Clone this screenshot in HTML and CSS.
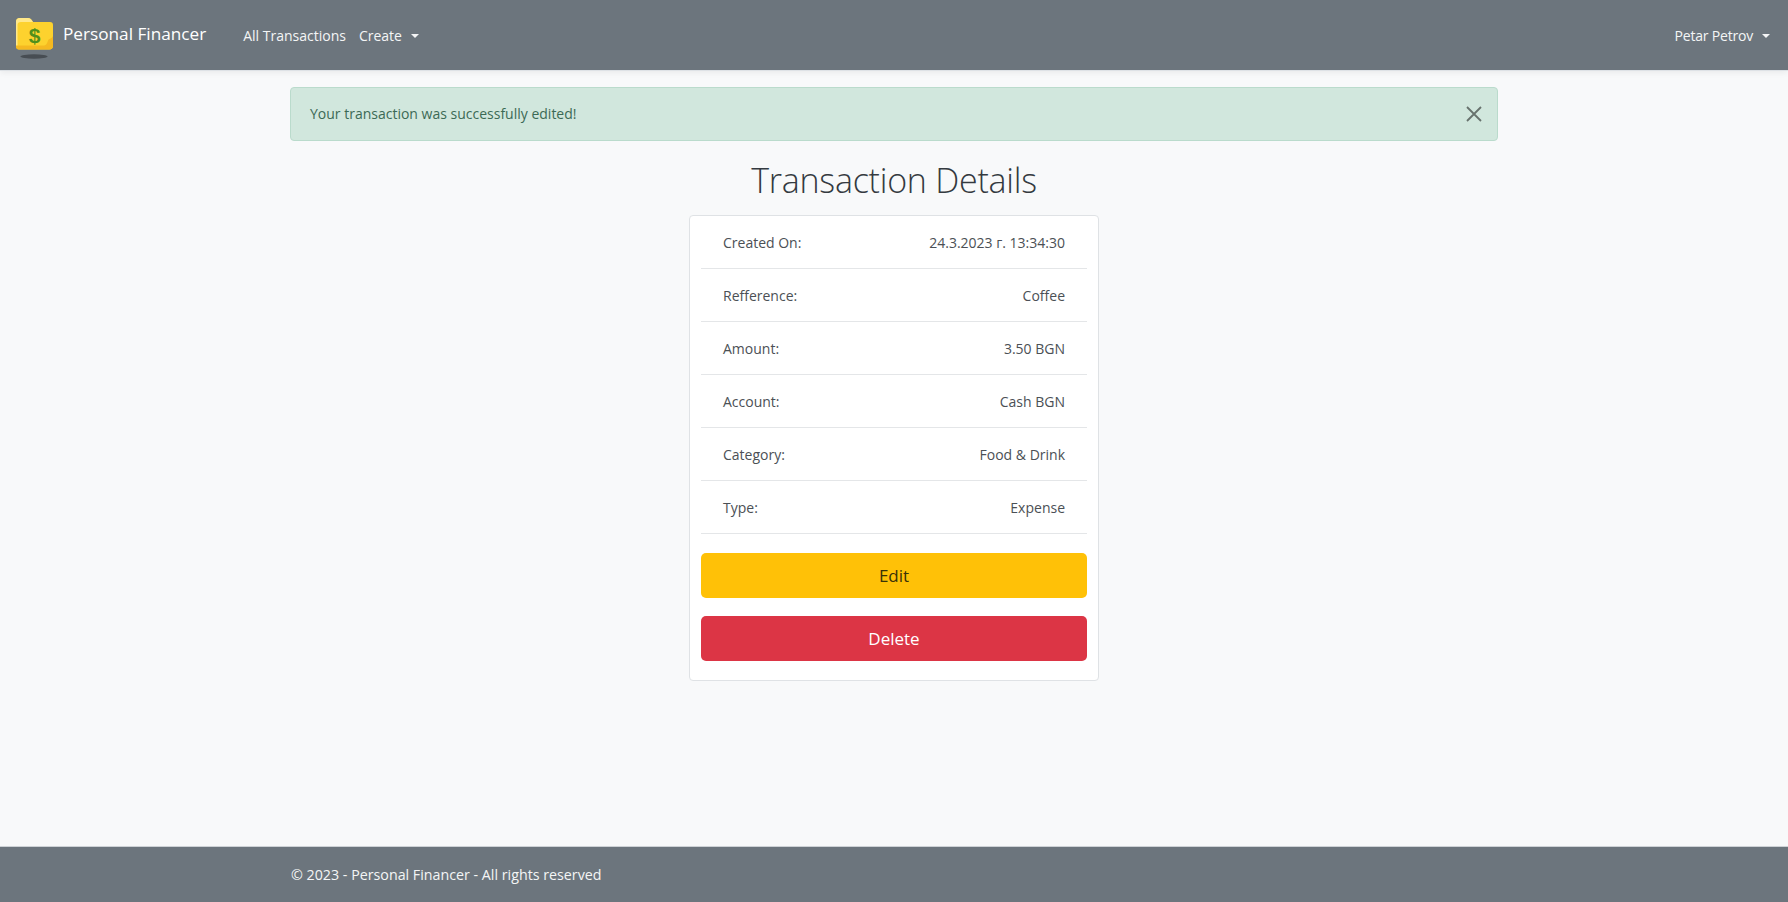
FILE: index.html
```html
<!DOCTYPE html>
<html lang="en">
<head>
<meta charset="utf-8">
<title>Transaction Details - Personal Financer</title>
<link rel="stylesheet" href="styles.css">
</head>
<body>
<header class="navbar">
  <a class="brand" href="#">
    <svg class="logo" width="40" height="44" viewBox="0 0 40 44" aria-hidden="true">
      <ellipse cx="20" cy="39.500" rx="13.500" ry="2.200" fill="#474d53"/>
      <path d="M2 4.500C2 2.500 3.500 1 5.500 1H14c2 0 3 1 4 2.500L19 5h17c2 0 3 1.200 3 3v21c0 2.200-1.500 3.500-3.500 3.500H5c-2 0-3-1.300-3-3.500z" fill="#fdd22e"/>
      <path d="M2 4.500C2 2.500 3.500 1 5.500 1H14c2 0 3 1 4 2.500L19 5H7C4.500 5 3.500 6 3.500 8v21H2z" fill="#ffe88a"/>
      <path d="M2 28.500v1C2 31.300 3.200 32.500 5 32.500h30.500c2 0 3.500-1.300 3.500-3.500V19c-1 2-2 2.500-3.500 3-1.500.6-1.500 2-2 3-.5 1.800-2 3.500-3.500 3.500z" fill="#f5b921"/>
      <text class="logo-dollar" x="20.500" y="25.500" text-anchor="middle">$</text>
    </svg>
    <span>Personal Financer</span>
  </a>
  <nav class="nav-main">
    <a href="#">All Transactions</a>
    <a href="#" class="caret">Create</a>
  </nav>
  <nav class="nav-user">
    <a href="#" class="caret">Petar Petrov</a>
  </nav>
</header>
<main class="container">
  <div class="alert">
    <span>Your transaction was successfully edited!</span>
    <svg class="close" width="16" height="16" viewBox="0 0 16 16" aria-label="Close">
      <path d="M1 1l14 14M15 1L1 15" stroke="#000" stroke-width="1.800" fill="none"/>
    </svg>
  </div>
  <h1 class="title">Transaction Details</h1>
  <section class="card">
    <ul class="rows">
      <li class="row"><span>Created On:</span><span>24.3.2023 г. 13:34:30</span></li>
      <li class="row"><span>Refference:</span><span>Coffee</span></li>
      <li class="row"><span>Amount:</span><span>3.50 BGN</span></li>
      <li class="row"><span>Account:</span><span>Cash BGN</span></li>
      <li class="row"><span>Category:</span><span>Food &amp; Drink</span></li>
      <li class="row"><span>Type:</span><span>Expense</span></li>
    </ul>
    <a href="#" class="btn btn-edit">Edit</a>
    <a href="#" class="btn btn-delete">Delete</a>
  </section>
</main>
<footer class="footer">
  <div class="footer-inner">© 2023 - Personal Financer - All rights reserved</div>
</footer>
</body>
</html>
```
FILE: styles.css
```css
* { box-sizing: border-box; }
html, body { height: 100%; }
body {
  margin: 0;
  min-height: 902px;
  display: flex;
  flex-direction: column;
  background: #f8f9fa;
  color: #4b5055;
  font-family: "Open Sans", "Noto Sans", "Liberation Sans", sans-serif;
  font-size: 14px;
  line-height: 22px;
}
a { text-decoration: none; color: inherit; }

.navbar {
  height: 71px;
  flex: none;
  display: flex;
  align-items: center;
  background: #6c757d;
  border-bottom: 1px solid #dee2e6;
  box-shadow: 0 2px 6px rgba(0, 0, 0, .06);
  color: #f4f5f6;
  padding: 2px 18px 0 14px;
}
.brand {
  display: flex;
  align-items: center;
  gap: 9px;
  font-size: 17.200px;
  margin-right: 37px;
  color: #fff;
}
.brand span { margin-top: -4px; }
.logo { flex: none; margin-top: 6px; }
.logo-dollar {
  font-family: "Liberation Sans", sans-serif;
  font-weight: 700;
  font-size: 21px;
  fill: #4f8f1c;
}
.nav-main { display: flex; gap: 13px; }
.nav-user { margin-left: auto; letter-spacing: -.2px; }
.caret { display: inline-flex; align-items: center; }
.caret::after {
  content: "";
  margin-left: 9px;
  border-top: 4.500px solid currentColor;
  border-left: 4px solid transparent;
  border-right: 4px solid transparent;
}

.container {
  flex: 1;
  width: 1208px;
  margin: 0 auto;
  padding-top: 16px;
}
.alert {
  height: 54px;
  display: flex;
  align-items: center;
  justify-content: space-between;
  padding: 0 15px 0 19px;
  background: #d1e7dd;
  border: 1px solid #badbcc;
  border-radius: 4px;
  color: #3c6a55;
}
.close { opacity: .5; }
.title {
  margin: 15px 0 11px;
  text-align: center;
  font-size: 34px;
  letter-spacing: -.25px;
  line-height: 48px;
  font-weight: 300;
  color: #343a40;
}
.card {
  width: 410px;
  height: 466px;
  margin: 0 auto;
  padding: 0 11px;
  background: #fff;
  border: 1px solid #dfe2e5;
  border-radius: 4px;
}
.rows { list-style: none; margin: 0 0 19px; padding: 0; }
.row {
  height: 53px;
  display: flex;
  align-items: center;
  justify-content: space-between;
  padding: 2px 22px 0;
  border-bottom: 1px solid #e4e6e8;
}
.btn {
  display: flex;
  align-items: center;
  justify-content: center;
  height: 45px;
  margin-bottom: 18px;
  padding-top: 1px;
  border-radius: 5px;
  font-size: 17px;
}
.btn-edit { background: #ffc107; color: #3a3208; }
.btn-delete { background: #dc3545; color: #fff; }

.footer {
  height: 56px;
  flex: none;
  display: flex;
  align-items: center;
  background: #6c757d;
  border-top: 1px solid #ced2d6;
  color: #f4f5f6;
}
.footer-inner { width: 1208px; margin: 0 auto; padding-left: 1px; font-size: 14.250px; }
```
